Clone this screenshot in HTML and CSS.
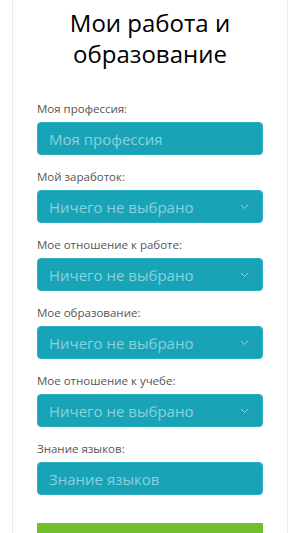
FILE: index.html
```
<!DOCTYPE html>
<html lang="ru">
<head>
<meta charset="utf-8">
<link rel="stylesheet" href="styles.css">
</head>
<body>
<div class="page">
  <div class="card">
    <h1 class="title">Мои работа и образование</h1>
    <form class="form">
      <div class="field">
        <label class="label">Моя профессия:</label>
        <div class="control"><span class="ph">Моя профессия</span></div>
      </div>
      <div class="field">
        <label class="label">Мой заработок:</label>
        <div class="control select"><span class="ph">Ничего не выбрано</span><svg class="chev" width="9" height="6" viewBox="0 0 9 6"><path d="M1 1l3.5 3.5L8 1" fill="none" stroke="#8fd4de" stroke-width="1"/></svg></div>
      </div>
      <div class="field">
        <label class="label">Мое отношение к работе:</label>
        <div class="control select"><span class="ph">Ничего не выбрано</span><svg class="chev" width="9" height="6" viewBox="0 0 9 6"><path d="M1 1l3.5 3.5L8 1" fill="none" stroke="#8fd4de" stroke-width="1"/></svg></div>
      </div>
      <div class="field">
        <label class="label">Мое образование:</label>
        <div class="control select"><span class="ph">Ничего не выбрано</span><svg class="chev" width="9" height="6" viewBox="0 0 9 6"><path d="M1 1l3.5 3.5L8 1" fill="none" stroke="#8fd4de" stroke-width="1"/></svg></div>
      </div>
      <div class="field">
        <label class="label">Мое отношение к учебе:</label>
        <div class="control select"><span class="ph">Ничего не выбрано</span><svg class="chev" width="9" height="6" viewBox="0 0 9 6"><path d="M1 1l3.5 3.5L8 1" fill="none" stroke="#8fd4de" stroke-width="1"/></svg></div>
      </div>
      <div class="field">
        <label class="label">Знание языков:</label>
        <div class="control"><span class="ph">Знание языков</span></div>
      </div>
      <div class="btn"></div>
    </form>
  </div>
</div>
</body>
</html>
```
FILE: styles.css
```
html, body {
  margin: 0;
  padding: 0;
  background: #fff;
  font-family: "Open Sans", "Noto Sans", sans-serif;
}
.page {
  padding: 0 12px;
  height: 533px;
  overflow: hidden;
}
.card {
  border-left: 1px solid #ebebeb;
  border-right: 1px solid #ebebeb;
  min-height: 600px;
  padding: 7px 24px 0;
}
.title {
  margin: 0 0 31px;
  font-size: 24px;
  line-height: 31px;
  font-weight: 400;
  text-align: center;
  color: #000;
}
.form {
  display: flex;
  flex-direction: column;
}
.field {
  display: flex;
  flex-direction: column;
  margin-bottom: 13px;
}
.label {
  font-size: 11.5px;
  line-height: 17px;
  color: #555;
  margin-bottom: 5px;
}
.control {
  height: 33px;
  box-sizing: border-box;
  background: #19a3b7;
  border: 1px solid #2ab0c2;
  border-radius: 4px;
  display: flex;
  align-items: center;
  justify-content: space-between;
  padding: 0 12px 0 11px;
}
.ph {
  font-size: 15px;
  color: #8ad2dd;
}
.chev {
  display: block;
  margin-right: 1px;
}
.btn {
  margin-top: 15px;
  height: 40px;
  background: #71bf2c;
}
```
